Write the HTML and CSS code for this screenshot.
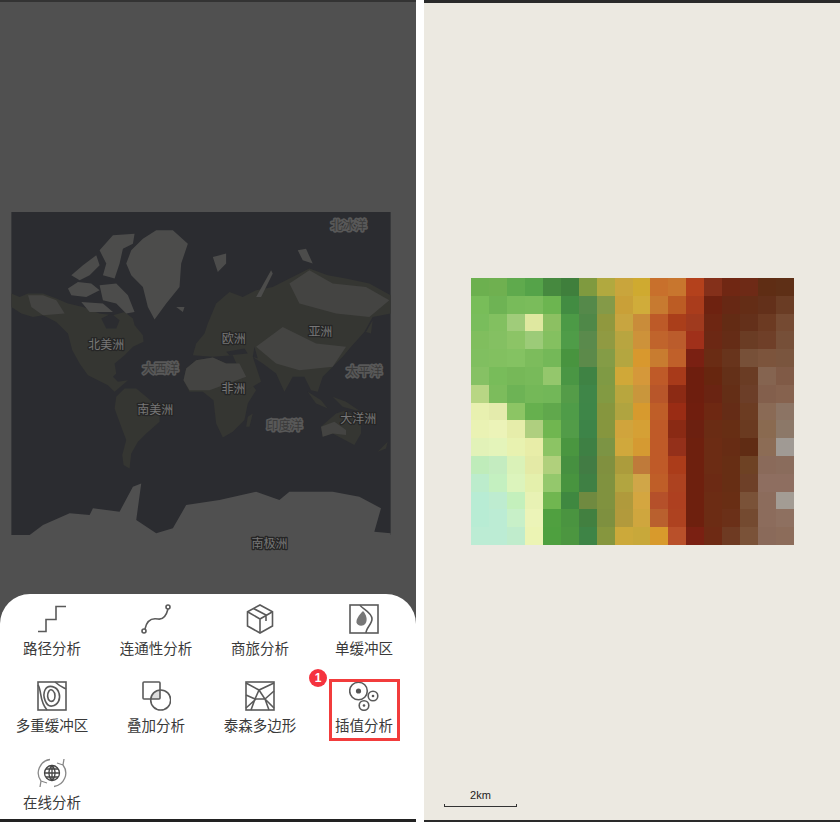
FILE: index.html
```html
<!DOCTYPE html>
<html>
<head>
    <title>插值分析</title>
    <link rel="stylesheet" href="styles.css">
</head>
<body>
    <div class="screen dimmed">
        <div class="map">
            <svg class="world" viewBox="35 35 1139 970" width="380" height="323">
                <rect class="sea" x="35" y="35" width="1139" height="970"/>
                <g class="land">
                    <path d="M35 280L60 290L85 280L130 280L170 295L205 310L250 320L300 340L340 345L375 335L400 355L405 375L430 405L432 425L400 440L375 465L345 490L350 520L340 530L355 545L385 540L345 575L325 555L295 540L265 525L240 490L218 450L205 400L170 365L130 345L100 350L65 340L35 320Z"/>
                    <path d="M350 590L375 565L410 565L440 590L480 625L480 665L440 700L415 725L395 760L390 805L372 795L368 765L380 720L365 680L345 625Z"/>
                    <path d="M552 540L560 505L590 480L640 472L680 490L720 490L740 530L770 570L745 610L735 660L700 695L670 712L650 670L642 600L610 575L570 575Z"/>
                    <path d="M580 465L590 430L615 400L625 370L650 310L690 275L730 290L770 270L820 260L870 235L930 205L985 225L1040 235L1110 250L1174 285L1174 340L1120 350L1095 395L1055 440L1030 470L1000 500L970 530L955 575L935 570L915 530L880 530L855 575L830 520L790 490L760 470L785 545L740 570L715 500L700 465L640 470Z"/>
                    <path d="M965 680L1010 640L1040 630L1085 660L1085 700L1065 735L1000 700L970 710Z"/>
                    <path d="M925 575L965 600L985 625L950 610ZM1000 590L1040 605L1085 635L1030 620Z"/>
                    <path d="M745 650L760 640L750 680L740 680ZM1135 755L1165 725L1160 745ZM1100 395L1120 360L1115 400Z"/>
                </g>
                <g class="land-light">
                    <path d="M552 540L560 505L590 480L640 472L680 490L720 490L740 530L700 545L630 570L570 570Z"/>
                    <path d="M870 250L930 210L1000 250L1100 260L1170 300L1110 350L1010 340L900 310Z"/>
                    <path d="M770 440L850 380L950 430L1040 440L1000 500L900 510L830 490Z"/>
                    <path d="M85 285L130 285L170 300L195 340L130 345L95 320Z"/>
                    <path d="M965 680L1005 665L1040 690L1040 705L1000 700L970 710Z"/>
                </g>
                <g class="sea">
                    <path d="M305 355L335 340L360 360L350 385L320 385Z"/>
                    <path d="M680 455L735 445L745 460L690 465ZM765 440L775 475L760 470Z"/>
                </g>
                <g class="land-pale">
                    <path d="M380 190L395 150L430 115L470 90L520 90L565 130L545 190L540 260L500 310L465 358L445 320L430 260L395 225Z"/>
                    <path d="M215 225L250 195L290 165L300 195L270 225L240 240Z"/>
                    <path d="M300 150L340 105L405 100L400 130L370 145L360 190L345 235L310 225L320 190Z"/>
                    <path d="M205 265L235 245L275 250L300 270L260 290L215 285Z"/>
                    <path d="M300 255L350 250L385 285L405 335L380 340L350 310L310 300Z"/>
                    <path d="M245 305L310 310L340 335L270 335Z"/>
                    <path d="M640 170L680 160L680 190L655 215ZM895 150L920 145L940 190L910 180ZM530 320L555 320L550 335ZM770 290L815 210L820 220L785 290Z"/>
                </g>
                <path class="ice" d="M90 1005L130 975L210 940L270 945L280 925L360 935L400 860L425 850L410 960L470 1000L520 985L560 915L660 900L770 875L840 900L870 875L1000 875L1080 890L1145 925L1125 995L1174 1000L1174 1005Z"/>
                <text class="label-sea" x="1048" y="88">北冰洋</text>
                <text class="label-land" x="320" y="445">北美洲</text>
                <text class="label-sea" x="483" y="518">大西洋</text>
                <text class="label-land" x="703" y="428">欧洲</text>
                <text class="label-land" x="963" y="408">亚洲</text>
                <text class="label-sea" x="1095" y="529">太平洋</text>
                <text class="label-land" x="702" y="578">非洲</text>
                <text class="label-land" x="467" y="643">南美洲</text>
                <text class="label-sea" x="855" y="691">印度洋</text>
                <text class="label-land" x="1077" y="668">大洋洲</text>
                <text class="label-land" x="810" y="1043">南极洲</text>
            </svg>
        </div>

        <div class="sheet">
            <div class="tool">
                <svg class="icon" viewBox="0 0 30 30"><path d="M1 27.5H9V15.5H19V2.5H29"/></svg>
                <span>路径分析</span>
            </div>
            <div class="tool">
                <svg class="icon" viewBox="0 0 30 30">
                    <circle cx="27" cy="3" r="2"/>
                    <circle cx="3" cy="27" r="2"/>
                    <path d="M4 25C6 15 12 14 17 15C24 16 26 9 27 5"/>
                </svg>
                <span>连通性分析</span>
            </div>
            <div class="tool">
                <svg class="icon" viewBox="0 0 30 30">
                    <path d="M15 1L27.5 7.7V22L15 29L2.5 22V7.7Z"/>
                    <path d="M2.5 7.7L15 15V29M15 15L27.5 7.7M8.5 4.5L21 11V17"/>
                </svg>
                <span>商旅分析</span>
            </div>
            <div class="tool">
                <svg class="icon" viewBox="0 0 30 30">
                    <rect x="1" y="1" width="28" height="28"/>
                    <path d="M11 1C13 5 23 8 23 15C23 20 17 24 17 29"/>
                    <path class="fill-grey" d="M14 7C10 11 7 15 7.5 18.5C8 22 14 23 16.5 19.5C19 16 17 10 14 7Z"/>
                </svg>
                <span>单缓冲区</span>
            </div>
            <div class="tool">
                <svg class="icon" viewBox="0 0 30 30">
                    <rect x="1" y="1" width="28" height="28"/>
                    <path d="M8 9C11 3 20 5 22 12C24 18 21 24 15 25C9 26 5 15 8 9Z"/>
                    <path d="M12 10C14 7 18 10 18 15C18 20 15 21 13 20C10 18 10 13 12 10Z"/>
                    <path d="M1 4C5 10 2 20 10 29M18 1C24 6 25 6 29 8"/>
                </svg>
                <span>多重缓冲区</span>
            </div>
            <div class="tool">
                <svg class="icon" viewBox="0 0 30 30">
                    <path class="fill-pale" d="M19 9A10 10 0 0 0 9.7 18H19Z"/>
                    <rect x="2" y="1" width="17" height="17" rx="1"/>
                    <circle cx="19.7" cy="19" r="10"/>
                </svg>
                <span>叠加分析</span>
            </div>
            <div class="tool">
                <svg class="icon" viewBox="0 0 30 30">
                    <rect x="1" y="1" width="28" height="28"/>
                    <path d="M1 2L14 9L29 2M1 27L11 18H20L29 27M1 14L10 18M14 9L20 18L24 29M14 9L10 18L6 29M29 10L20 18"/>
                </svg>
                <span>泰森多边形</span>
            </div>
            <div class="tool picked">
                <svg class="icon" viewBox="0 0 30 30">
                    <circle cx="9.5" cy="10" r="8.8"/>
                    <circle class="fill-dark" cx="9.5" cy="10" r="2.6"/>
                    <circle cx="24" cy="15" r="4.8"/>
                    <circle class="fill-dark" cx="24" cy="15" r="1.3"/>
                    <circle cx="15" cy="24.5" r="4.8"/>
                    <circle class="fill-dark" cx="15" cy="24.5" r="1.3"/>
                </svg>
                <span>插值分析</span>
                <div class="pick-box"></div>
                <div class="badge">1</div>
            </div>
            <div class="tool">
                <svg class="icon" viewBox="0 0 30 30">
                    <circle class="thin-dark" cx="15" cy="15" r="7.5"/>
                    <path class="thin-dark" d="M7.5 15H22.5M15 7.5V22.5M9 11H21M9 19H21M15 7.5C11 11 11 19 15 22.5C19 19 19 11 15 7.5Z"/>
                    <path class="pale-line" d="M13 1.5A13.5 13.5 0 0 0 4 23M17 28.5A13.5 13.5 0 0 0 26 7M20 5L26 7L27 1M10 25L4 23L3 29"/>
                </svg>
                <span>在线分析</span>
            </div>
        </div>
    </div>

    <div class="screen result">
        <div class="grid" id="grid"></div>
        <div class="scale">
            <span>2km</span>
            <div class="scale-bar"></div>
        </div>
    </div>

    <script src="script.js"></script>
</body>
</html>
```

FILE: styles.css
```css
body {
    margin: 0;
    width: 840px;
    height: 822px;
    display: flex;
    justify-content: space-between;
    background-color: #fff;
    overflow: hidden;
    font-family: "Noto Sans CJK SC", sans-serif;
}

.screen {
    box-sizing: border-box;
    height: 822px;
    display: flex;
    flex-direction: column;
}

.dimmed {
    width: 416px;
    padding-top: 212px;
    background-color: #505050;
    border-top: 2px solid #333;
    border-bottom: 3px solid #222;
}

.map {
    margin-top: -2px;
    margin-left: 11px;
    height: 323px;
}

.world {
    display: block;
    overflow: visible;
}

.sea { fill: #2b2c30; }
.land { fill: #353632; }
.land-light { fill: #444442; }
.land-pale { fill: #4c4c4b; }
.ice { fill: #505050; }

.world text {
    font-size: 36px;
    text-anchor: middle;
    paint-order: stroke;
    stroke-linejoin: round;
}

.label-land {
    fill: #777;
    stroke: #262626;
    stroke-width: 8px;
}

.label-sea {
    fill: #3a3a3a;
    stroke: #585858;
    stroke-width: 10px;
}

.sheet {
    box-sizing: border-box;
    width: 416px;
    height: 225px;
    margin-top: 59px;
    padding-top: 10px;
    display: grid;
    grid-template-columns: repeat(4, 104px);
    grid-auto-rows: 55px;
    row-gap: 22px;
    background-color: #fff;
    border-radius: 30px 30px 0 0;
}

.tool {
    position: relative;
    display: flex;
    flex-direction: column;
    align-items: center;
    font-size: 14.5px;
    line-height: 20px;
    color: #3a3a3a;
}

.tool span {
    margin-top: 4px;
    white-space: nowrap;
}

.icon {
    width: 30px;
    height: 30px;
    fill: none;
    stroke: #5a5a5a;
    stroke-width: 1.6;
}

.fill-grey { fill: #777; stroke: none; }
.fill-pale { fill: #ddd; stroke: none; }
.fill-dark { fill: #555; stroke: none; }
.thin-dark { stroke: #444; stroke-width: 1.3; }
.pale-line { stroke: #888; stroke-width: 1.3; }

.pick-box {
    position: absolute;
    left: 17px;
    top: -2px;
    width: 71px;
    height: 62px;
    box-sizing: border-box;
    border: 3px solid #f23c3c;
}

.badge {
    position: absolute;
    left: -3px;
    top: -12px;
    width: 18px;
    height: 18px;
    border-radius: 50%;
    background-color: #f5333f;
    color: #fff;
    font-family: "Liberation Sans", sans-serif;
    font-size: 12px;
    font-weight: bold;
    line-height: 18px;
    text-align: center;
}

.result {
    width: 416px;
    padding-top: 275px;
    background-color: #ece9e1;
    border-top: 3px solid #2a2a2a;
    border-bottom: 2px solid #2a2a2a;
}

.grid {
    margin-left: 47px;
    width: 323px;
    height: 267px;
    display: grid;
    grid-template-columns: repeat(18, 1fr);
    grid-template-rows: repeat(15, 1fr);
}

.scale {
    margin-top: auto;
    margin-left: 20px;
    margin-bottom: 13px;
    width: 73px;
    text-align: center;
    font-family: "Liberation Sans", sans-serif;
    font-size: 11px;
    color: #222;
}

.scale span {
    display: block;
    line-height: 12px;
    margin-bottom: 3px;
}

.scale-bar {
    height: 2px;
    border: 1px solid #333;
    border-top: none;
}
```

FILE: script.js
```js
const rows = [
    "6cb04f 6fb050 5faa4d 55a349 46893f 3f7f3c 7f9a3f b1a93f c9a53c cfaa30 c8702c c8762e b4411c 84301a 702713 6e2a16 5f2d14 5e2f16",
    "78bd59 6eb354 78bb5a 7abc5b 6cb550 428c42 55894a 849a48 c9a038 d0ac3a c77a30 bc5c24 aa3c1c 6e2210 672814 642d16 63301a 6a3c24",
    "79bd5c 82c060 a0cc7a dfe8a0 8cc062 4c9a46 4f8848 90983e c8a540 c98c3a bd5a28 aa3e1a a03a1e 6e2612 632b14 64301a 6c3a22 754a32",
    "80be5e 84c062 8cc466 9ccb78 84c060 4f9c48 5a8a4c 909a42 b8a540 cd923a c0642c bb5c2c a0301a 6c2814 652c16 6a3c24 6f3f28 764f38",
    "80bf60 82c060 84c262 7cbc5c 74b858 48943f 5c8a4a 849c46 b4a640 d8982e c87c30 c0602a 7a2012 6a2c14 68341c 775038 7c543c 7a553e",
    "86c164 78bc5a 76b858 78ba5a 94c76c 4a9644 3f8344 7f9a44 d0a838 d5983a bf5a28 a83a1a 6e1e0e 67260f 643018 6a3c24 856450 805a46",
    "b8d684 7cbc5c 6db355 74b858 72b758 549c48 3f8648 829a42 b8a63e c9963c b8562a 8c2a14 6e1e0e 6a2412 642e16 6c3e28 835f4c 86624e",
    "e8f0b0 e4ebac 8cc564 66b04e 60a84c 4f9c48 3e8648 86963e b0a440 d79a2e bf5e28 9a2c14 701e0e 6e2812 652c16 6c3c22 8a6a55 8c7464",
    "eaf2b4 ecf3b8 e6edaa afcf7f 70b650 529c48 3d8448 86963e d0a43c d5a035 bf5a28 8a2a14 6c2010 6a2c14 672e14 6a3a20 8a6a50 8c7868",
    "e2f2b8 e4f4ba e8f2b0 e8eda8 8cc464 4a9640 3e8044 7c9444 d0a83c d59a32 bf5a28 94301a 6e200e 6c2c14 672c14 602c14 8c6c55 a09a94",
    "bfecba c4ecc0 daf2b8 e4eaa6 b0d07c 469040 427c44 80903f ac9c3c bf7a3a bf5a28 ab3c1a 6e200e 6c2c14 672e14 6e4224 8a6a5a 8a6c5c",
    "bceccc c4f0c0 dcf4bc e4f0ac 94c86c 48943f 3f8044 80923f b2a540 d0a648 bf5e28 ad4220 6e200e 6c2a14 672e14 6e4028 8e6e60 8e6e60",
    "b8ecd4 beecd0 c4f0bc e8f2b4 70b650 3f8840 708a40 80923f b09a3c d4a640 b5502a ae4020 6e200e 6c2c14 692e14 7a5238 8c6c5c a39c94",
    "b8ecd4 bcecd4 c8f0c8 ecf4b8 50a040 4a9440 428040 7e903f b29a3c cfa63e b9602e ae4220 6e200e 6c2c14 6b3018 744a30 8c6c5c 8e7060",
    "bcecd4 bcecd4 c0eccc ecf4b4 4ea03f 4c9640 3e8446 86963e cca93a c8a83a d89a2c b9502a 7a2012 6e2a14 6e3a22 7a5238 8a6a5a 8c6c5a"
];

const grid = document.getElementById("grid");

rows.forEach(row => {
    row.split(" ").forEach(color => {
        const cell = document.createElement("div");
        cell.style.backgroundColor = "#" + color;
        grid.appendChild(cell);
    });
});
```
